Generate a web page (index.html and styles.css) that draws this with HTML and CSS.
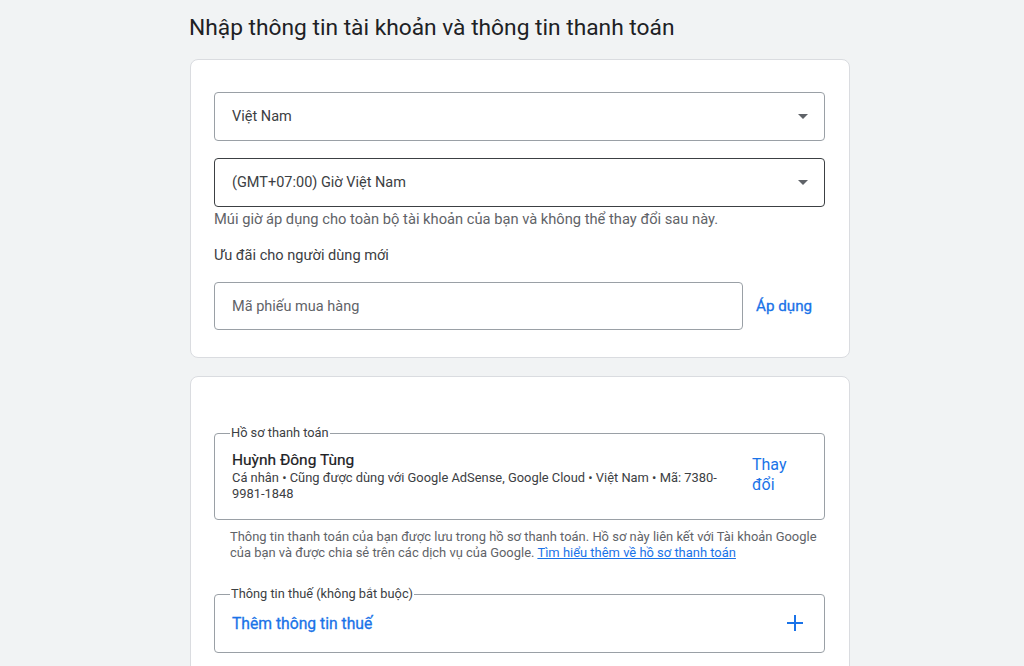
FILE: index.html
```html
<!DOCTYPE html>
<html lang="vi">
<head>
<meta charset="utf-8">
<title>Nhập thông tin</title>
<link rel="stylesheet" href="styles.css">
</head>
<body>
<main class="page">
  <h1 class="title">Nhập thông tin tài khoản và thông tin thanh toán</h1>

  <section class="card card-account">
    <div class="select">
      <span class="select-value">Việt Nam</span>
      <span class="arrow"></span>
    </div>
    <div class="select select-focused">
      <span class="select-value">(GMT+07:00) Giờ Việt Nam</span>
      <span class="arrow"></span>
    </div>
    <p class="helper">Múi giờ áp dụng cho toàn bộ tài khoản của bạn và không thể thay đổi sau này.</p>
    <p class="label">Ưu đãi cho người dùng mới</p>
    <div class="coupon-row">
      <div class="input"><span class="placeholder">Mã phiếu mua hàng</span></div>
      <a class="link-btn" href="#">Áp dụng</a>
    </div>
  </section>

  <section class="card card-billing">
    <fieldset class="box profile">
      <legend class="box-legend">Hồ sơ thanh toán</legend>
      <div class="profile-row">
        <div class="profile-info">
          <div class="profile-name">Huỳnh Đông Tùng</div>
          <div class="profile-detail">Cá nhân • Cũng được dùng với Google AdSense, Google Cloud • Việt Nam • Mã: 7380-<wbr>9981-1848</div>
        </div>
        <a class="profile-action" href="#">Thay đổi</a>
      </div>
    </fieldset>
    <p class="info">Thông tin thanh toán của bạn được lưu trong hồ sơ thanh toán. Hồ sơ này liên kết với Tài khoản Google của bạn và được chia sẻ trên các dịch vụ của Google. <a href="#" class="info-link">Tìm hiểu thêm về hồ sơ thanh toán</a></p>

    <fieldset class="box tax">
      <legend class="box-legend">Thông tin thuế (không bắt buộc)</legend>
      <div class="tax-row">
        <span class="tax-add">Thêm thông tin thuế</span>
        <svg class="plus" width="24" height="24" viewBox="0 0 24 24" aria-hidden="true"><path d="M12 4v16M4 12h16" stroke="#1a73e8" stroke-width="2" fill="none"/></svg>
      </div>
    </fieldset>
  </section>
</main>
</body>
</html>
```

FILE: styles.css
```css
html, body {
  margin: 0;
  padding: 0;
  background: #f1f3f4;
  font-family: Roboto, "Noto Sans", Arial, sans-serif;
  color: #3c4043;
}

.page {
  width: 660px;
  margin-left: 190px;
  padding-top: 14px;
}

.title {
  margin: 0 0 17px -1px;
  font-size: 22.75px;
  line-height: 28px;
  font-weight: 400;
  color: #202124;
}

.card {
  background: #fff;
  border: 1px solid #dadce0;
  border-radius: 8px;
  box-sizing: border-box;
}

.card-account {
  padding: 32px 24px 27px 23px;
  margin-bottom: 18px;
}

.select {
  display: flex;
  align-items: center;
  justify-content: space-between;
  height: 49px;
  box-sizing: border-box;
  border: 1px solid #9aa0a6;
  border-radius: 4px;
  padding: 0 16px 0 17px;
  width: 611px;
}

.select + .select {
  margin-top: 17px;
}

.select-focused {
  border-color: #3c4043;
}

.select-value {
  font-size: 14.5px;
  color: #3c4043;
}

.arrow {
  width: 0;
  height: 0;
  border-left: 5px solid transparent;
  border-right: 5px solid transparent;
  border-top: 5px solid #5f6368;
}

.helper {
  margin: 2px 0 0;
  font-size: 14.7px;
  line-height: 20px;
  color: #5f6368;
}

.label {
  margin: 16px 0 0;
  font-size: 14.6px;
  line-height: 20px;
  color: #3c4043;
}

.coupon-row {
  display: flex;
  align-items: center;
  margin-top: 17px;
  gap: 13px;
}

.input {
  width: 529px;
  height: 48px;
  box-sizing: border-box;
  border: 1px solid #9aa0a6;
  border-radius: 4px;
  display: flex;
  align-items: center;
  padding-left: 17px;
}

.placeholder {
  font-size: 14.5px;
  color: #5f6368;
}

.link-btn {
  font-size: 15.2px;
  font-weight: 400;
  -webkit-text-stroke: 0.3px #1a73e8;
  color: #1a73e8;
  text-decoration: none;
}

.card-billing {
  padding: 48px 24px 20px 23px;
}

.box {
  margin: 0;
  width: 611px;
  box-sizing: border-box;
  border: 1px solid #9aa0a6;
  border-radius: 4px;
  padding: 0 16px 0 17px;
  min-width: 0;
}

.box-legend {
  margin-left: -2px;
  padding: 0 1px;
  font-size: 12.8px;
  line-height: 16px;
  color: #3c4043;
}

.profile {
  padding-top: 9px;
  padding-bottom: 17px;
}

.profile-row {
  display: flex;
  align-items: flex-start;
  gap: 16px;
}

.profile-info {
  flex: 1;
  min-width: 0;
}

.profile-name {
  font-size: 15.5px;
  line-height: 20px;
  font-weight: 400;
  -webkit-text-stroke: 0.2px #202124;
  color: #202124;
}

.profile-detail {
  font-size: 12.9px;
  line-height: 16px;
  color: #3c4043;
}

.profile-action {
  width: 56px;
  margin-top: 5px;
  font-size: 16px;
  line-height: 20px;
  font-weight: 400;
  color: #1a73e8;
  text-decoration: none;
}

.info {
  margin: 9px 0 0;
  padding: 0 0 0 16px;
  font-size: 12.95px;
  line-height: 16px;
  color: #5f6368;
}

.info-link {
  color: #1a73e8;
  text-decoration: underline;
}

.tax {
  margin-top: 25px;
  padding-top: 11px;
  padding-bottom: 19px;
  padding-right: 17px;
}

.tax-row {
  display: flex;
  align-items: center;
  justify-content: space-between;
  height: 20px;
}

.tax-add {
  font-size: 15.7px;
  font-weight: 400;
  -webkit-text-stroke: 0.3px #1a73e8;
  color: #1a73e8;
}

.plus {
  display: block;
}
```
